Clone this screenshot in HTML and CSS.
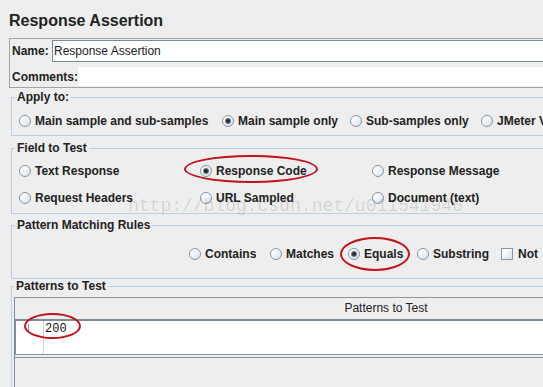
FILE: index.html
```html
<!DOCTYPE html>
<html lang="en">

<head>
    <meta charset="UTF-8">
    <meta name="viewport" content="width=device-width, initial-scale=1.0">
    <title>Response Assertion</title>

    <link rel="stylesheet" href="styles.css">
</head>

<body>
    <div class="page">
        <h1 class="title">Response Assertion</h1>

        <div class="name-box">
            <div class="name-row">
                <span class="lbl">Name:</span>
                <input class="name-input" type="text" value="Response Assertion">
            </div>
            <div class="comments-row">
                <span class="lbl">Comments:</span>
                <div class="comments-field"></div>
            </div>
        </div>

        <fieldset class="group apply">
            <legend>Apply to:</legend>
            <div class="opts apply-opts">
                <label class="opt"><span class="radio"></span>Main sample and sub-samples</label>
                <label class="opt"><span class="radio on"></span>Main sample only</label>
                <label class="opt"><span class="radio"></span>Sub-samples only</label>
                <label class="opt"><span class="radio"></span>JMeter Variable</label>
            </div>
        </fieldset>

        <fieldset class="group field">
            <legend>Field to Test</legend>
            <div class="opts field-opts">
                <label class="opt"><span class="radio"></span>Text Response</label>
                <label class="opt"><span class="radio on"></span>Response Code</label>
                <label class="opt"><span class="radio"></span>Response Message</label>
                <label class="opt"><span class="radio"></span>Request Headers</label>
                <label class="opt"><span class="radio"></span>URL Sampled</label>
                <label class="opt"><span class="radio"></span>Document (text)</label>
            </div>
        </fieldset>

        <fieldset class="group rules">
            <legend>Pattern Matching Rules</legend>
            <div class="opts rule-opts">
                <label class="opt"><span class="radio"></span>Contains</label>
                <label class="opt"><span class="radio"></span>Matches</label>
                <label class="opt"><span class="radio on"></span>Equals</label>
                <label class="opt"><span class="radio"></span>Substring</label>
                <label class="opt"><span class="check"></span>Not</label>
            </div>
        </fieldset>

        <fieldset class="group patterns">
            <legend>Patterns to Test</legend>
            <div class="table-pane">
                <div class="table-head">Patterns to Test</div>
                <div class="table-body">
                    <div class="table-row">
                        <div class="row-num"><span class="caret"></span></div>
                        <div class="row-val">200</div>
                    </div>
                </div>
            </div>
        </fieldset>

        <!-- annotations drawn over the screenshot -->
        <div class="mark mark-code"></div>
        <div class="mark mark-equals"></div>
        <div class="mark mark-200"></div>
        <div class="watermark">http://blog.csdn.net/u011541946</div>
    </div>
</body>

</html>
```

FILE: styles.css
```css
body {
    margin: 0;
    padding: 0;
    background-color: #eeeeee;
    font-family: "Liberation Sans", Arial, sans-serif;
    font-size: 12px;
    color: #222;
    overflow: hidden;
}

.page {
    position: relative;
    width: 760px;
    height: 387px;
}

.title {
    margin: 0;
    padding: 11px 0 0 9px;
    font-size: 16px;
    line-height: 20px;
    font-weight: bold;
    color: #222;
}

.name-box {
    margin: 7px 0 0 9px;
    border: 1px solid #a3a3a3;
    padding: 1px 0 1px 2px;
}

.lbl {
    flex: none;
    font-weight: bold;
    white-space: nowrap;
}

.name-row {
    display: flex;
    align-items: center;
    height: 22px;
}

.name-row .lbl {
    width: 40px;
}

.name-input {
    flex: 1;
    height: 22px;
    box-sizing: border-box;
    margin: 0;
    border: 1px solid #7a8a99;
    padding: 0 1px;
    font-family: "Liberation Sans", Arial, sans-serif;
    font-size: 12px;
    color: #222;
    background-color: #fff;
    outline: none;
}

.comments-row {
    display: flex;
    align-items: center;
    height: 19px;
    margin-top: 5px;
}

.comments-field {
    flex: 1;
    height: 19px;
    background-color: #fff;
}

/* titled groups */
.group {
    margin: 5px 0 0 11px;
    border: 1px solid #b8cfe5;
    padding: 0 0 0 3px;
    min-width: 0;
}

.group legend {
    padding: 0 2px;
    font-weight: bold;
    line-height: 14px;
}

.apply {
    margin-top: 2px;
    padding-top: 8px;
    padding-bottom: 5px;
}

.field {
    padding-top: 7px;
    padding-bottom: 6px;
}

.field-opts {
    row-gap: 9px;
}

.rules {
    margin-top: 4px;
    padding-top: 13px;
    padding-bottom: 15px;
}

.patterns {
    margin-top: 0;
    padding-top: 4px;
    padding-left: 2px;
    height: 120px;
}

.opts {
    display: grid;
    padding-left: 4px;
}

.apply-opts {
    grid-template-columns: 203px 128px 131px auto;
}

.field-opts {
    grid-template-columns: 181px 172px auto;
}

.rule-opts {
    grid-template-columns: 81px 78px 69px 84px auto;
    padding-left: 174px;
}

.opt {
    display: flex;
    align-items: center;
    height: 18px;
    font-weight: bold;
    white-space: nowrap;
}

.radio {
    position: relative;
    flex: none;
    width: 12px;
    height: 12px;
    box-sizing: border-box;
    margin-right: 4px;
    border: 1px solid #8496a9;
    border-radius: 50%;
    background: linear-gradient(135deg, #ffffff 20%, #d6dee8 100%);
}

.radio.on::after {
    content: "";
    position: absolute;
    left: 3px;
    top: 3px;
    width: 4px;
    height: 4px;
    border-radius: 50%;
    background-color: #2a2a2a;
    box-shadow: 0 0 0 1px #6d7a88;
}

.check {
    flex: none;
    width: 12px;
    height: 12px;
    box-sizing: border-box;
    margin-right: 5px;
    border: 1px solid #8496a9;
    background: linear-gradient(135deg, #ffffff 20%, #d6dee8 100%);
}

/* table */
.table-pane {
    width: 742px;
    height: 120px;
    border-left: 1px solid #7d8893;
    border-top: 1px solid #8a96a0;
}

.table-head {
    height: 21px;
    line-height: 21px;
    text-align: center;
    color: #222;
    border-bottom: 2px solid #7f8b96;
}

.table-body {
    background-color: #fff;
    border-left: 1px solid #7f8b96;
    border-bottom: 1px solid #8a939c;
    box-shadow: 0 2px 0 #eeeeee, 0 3px 0 #8a939c;
}

.table-row {
    display: flex;
    height: 33px;
}

.row-num {
    width: 27px;
    border-right: 1px solid #d4d4d4;
    position: relative;
}

.caret {
    position: absolute;
    left: 12px;
    top: 3px;
    width: 1px;
    height: 7px;
    background-color: #7fa2cc;
}

.row-val {
    padding: 1px 0 0 1px;
    font-family: "Liberation Mono", "Courier New", monospace;
    font-size: 12px;
    line-height: 14px;
    color: #111;
}

/* red hand-drawn ellipses */
.mark {
    position: absolute;
    border: 2px solid #c2121c;
    border-radius: 50%;
    box-sizing: border-box;
}

.mark-code {
    left: 184px;
    top: 155px;
    width: 134px;
    height: 28px;
}

.mark-equals {
    left: 340px;
    top: 237px;
    width: 70px;
    height: 34px;
}

.mark-200 {
    left: 24px;
    top: 313px;
    width: 57px;
    height: 26px;
}

.watermark {
    position: absolute;
    left: 128px;
    top: 196px;
    font-family: "Liberation Mono", "Courier New", monospace;
    font-size: 18px;
    line-height: 20px;
    color: rgba(0, 0, 0, 0.12);
    pointer-events: none;
}
```
